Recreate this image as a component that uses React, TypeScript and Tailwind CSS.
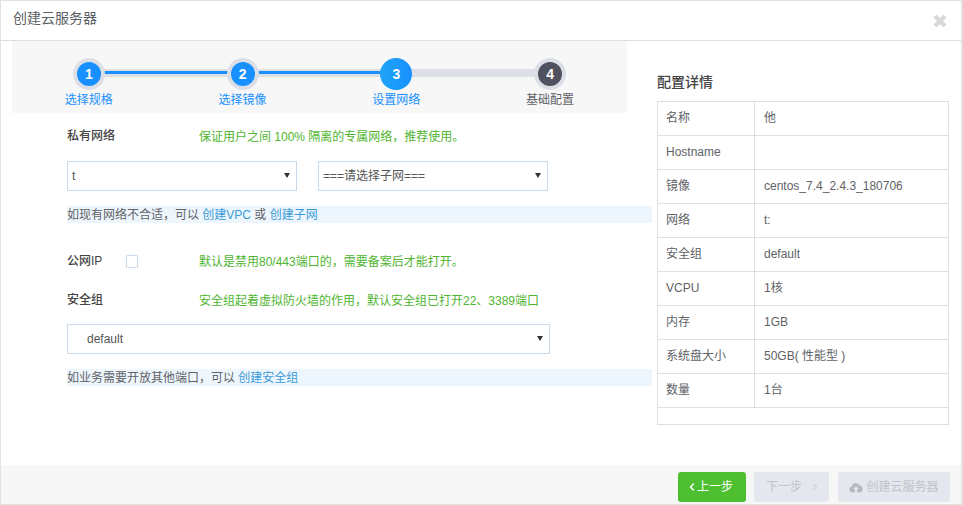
import { ChevronLeft, ChevronRight } from "lucide-react";

const font = "font-['Liberation_Sans','Noto_Sans_CJK_SC',sans-serif]";

const steps = [
  { n: "1", label: "选择规格", state: "done" },
  { n: "2", label: "选择镜像", state: "done" },
  { n: "3", label: "设置网络", state: "active" },
  { n: "4", label: "基础配置", state: "todo" },
];

const details = [
  ["名称", "他"],
  ["Hostname", ""],
  ["镜像", "centos_7.4_2.4.3_180706"],
  ["网络", "t:"],
  ["安全组", "default"],
  ["VCPU", "1核"],
  ["内存", "1GB"],
  ["系统盘大小", "50GB( 性能型 )"],
  ["数量", "1台"],
];

function Stepper() {
  return (
    <div className="ml-[11px] flex h-[72px] w-[615px] bg-[#f7f7f8] pt-[17px]">
      {steps.map((s, i) => (
        <div key={s.n} className="relative flex w-[154px] flex-col items-center">
          {i < 3 && (
            <div className="absolute left-[77px] top-[11px] h-[8px] w-[154px] bg-[#dcdfe6] pt-[2px]">
              {i < 2 && <div className="h-[3px] w-full bg-[#1890ff]" />}
            </div>
          )}
          <div
            className={
              s.state === "done"
                ? "relative flex h-[32px] w-[32px] items-center justify-center rounded-full border-[4px] border-[#dcdfe6] bg-[#1890ff] text-[14px] font-bold text-white"
                : s.state === "active"
                  ? "relative flex h-[32px] w-[32px] items-center justify-center rounded-full bg-gradient-to-r from-[#1fa5f5] to-[#1890ff] text-[14px] font-bold text-white"
                  : "relative flex h-[32px] w-[32px] items-center justify-center rounded-full border-[4px] border-[#dcdfe6] bg-[#50535f] text-[14px] font-bold text-white"
            }
          >
            {s.n}
          </div>
          <div className={s.state === "todo" ? "mt-[2px] text-[12px] leading-[16px] text-[#606266]" : "mt-[2px] text-[12px] leading-[16px] text-[#1890ff]"}>
            {s.label}
          </div>
        </div>
      ))}
    </div>
  );
}

function Select({ value, width, indent }: { value: string; width: string; indent: string }) {
  return (
    <div className={`relative h-[30px] ${width}`}>
      <select
        defaultValue={value}
        className={`h-full w-full appearance-none ${indent} rounded-none border border-[#ccd9e6] bg-white text-[12px] text-[#555]`}
      >
        <option>{value}</option>
      </select>
      <svg width="6" height="5" viewBox="0 0 6 5" className="pointer-events-none absolute right-[7px] top-[12px]" aria-hidden>
        <path d="M0 0H6L3 5Z" fill="#333" />
      </svg>
    </div>
  );
}

export default function App() {
  return (
    <div className={`${font} flex h-[505px] w-[963px] flex-col overflow-hidden border border-r-[2px] border-[#e2e2e2] bg-white text-[12px] text-[#606266]`}>
      <header className="flex h-[40px] shrink-0 items-center justify-between border-b border-[#dcdfe6] pl-[12px] pr-[13px]">
        <h1 className="mb-[4px] text-[14px] font-normal text-[#5a5e66]">创建云服务器</h1>
        <svg width="16" height="16" viewBox="0 0 16 16" className="text-[#d8d8d8]" aria-hidden>
          <path d="M3 3 13 13M13 3 3 13" stroke="currentColor" strokeWidth="4.4" />
        </svg>
      </header>

      <div className="flex min-h-0 flex-1">
        <main className="w-[656px] shrink-0">
          <Stepper />
          <div className="ml-[66px] w-[585px]">
            <div className="mt-[15px] flex h-[16px] items-center">
              <span className="w-[132px] font-medium text-[#444]">私有网络</span>
              <span className="mt-[2px] text-[#4fb52f]">保证用户之间 100% 隔离的专属网络，推荐使用。</span>
            </div>
            <div className="mt-[17px] flex gap-[21px]">
              <Select value="t" width="w-[230px]" indent="pl-[4px]" />
              <Select value="===请选择子网===" width="w-[230px]" indent="pl-[4px]" />
            </div>
            <div className="mt-[15px] h-[17px] bg-[#eef6fd] leading-[19px]">
              如现有网络不合适，可以 <span className="text-[#3a9bd9]">创建VPC</span> 或 <span className="text-[#3a9bd9]">创建子网</span>
            </div>
            <div className="mt-[30px] flex h-[16px] items-center">
              <span className="w-[59px] font-medium text-[#444]">公网IP</span>
              <span className="h-[13px] w-[12px] rounded-[1px] border border-[#ccd9e6]" />
              <span className="ml-[61px] mt-[2px] text-[#4fb52f]">默认是禁用80/443端口的，需要备案后才能打开。</span>
            </div>
            <div className="mt-[23px] flex h-[16px] items-center">
              <span className="w-[132px] font-medium text-[#444]">安全组</span>
              <span className="mt-[2px] text-[#4fb52f]">安全组起着虚拟防火墙的作用，默认安全组已打开22、3389端口</span>
            </div>
            <div className="mt-[16px]">
              <Select value="default" width="w-[483px]" indent="pl-[19px]" />
            </div>
            <div className="mt-[15px] h-[17px] bg-[#eef6fd] leading-[19px]">
              如业务需要开放其他端口，可以 <span className="text-[#3a9bd9]">创建安全组</span>
            </div>
          </div>
        </main>

        <aside className="w-[292px] shrink-0 pt-[31px]">
          <h2 className="text-[14px] font-medium leading-[20px] text-[#444]">配置详情</h2>
          <div className="mt-[9px] border border-[#dcdfe6]">
            {details.map(([k, v]) => (
              <div key={k} className="flex h-[34px] border-b border-[#dcdfe6] leading-[32px]">
                <div className="w-[97px] shrink-0 border-r border-[#dcdfe6] pl-[8px]">{k}</div>
                <div className="pl-[9px]">{v}</div>
              </div>
            ))}
            <div className="h-[16px]" />
          </div>
        </aside>
      </div>

      <footer className="flex h-[39px] shrink-0 items-start justify-end bg-[#f7f7f8] pr-[11px] pt-[7px]">
        <button className="flex h-[30px] w-[68px] items-center rounded-[3px] bg-[#4fbf32] pl-[8px] text-white">
          <ChevronLeft size={12} strokeWidth={3} className="mr-[-1px]" />上一步
        </button>
        <button className="ml-[8px] flex h-[30px] w-[75px] items-center gap-[7px] rounded-[3px] bg-[#e4e7ed] pl-[12px] text-[#c0c4cc]">
          下一步
          <ChevronRight size={12} strokeWidth={2} />
        </button>
        <button className="ml-[9px] flex h-[30px] w-[112px] items-center justify-center gap-[3px] rounded-[3px] bg-[#e4e7ed] text-[#c0c4cc]">
          <svg width="14" height="11" viewBox="0 0 14 11" aria-hidden>
            <path fill="#b4b8bf" d="M3.2 10.5A3 3 0 0 1 2.7 4.6 4.2 4.2 0 0 1 10.6 3.6 3.5 3.5 0 0 1 10.8 10.5H8.2V7.2H9.9L7 4.2 4.1 7.2H5.8V10.5Z" />
          </svg>
          创建云服务器
        </button>
      </footer>
    </div>
  );
}
